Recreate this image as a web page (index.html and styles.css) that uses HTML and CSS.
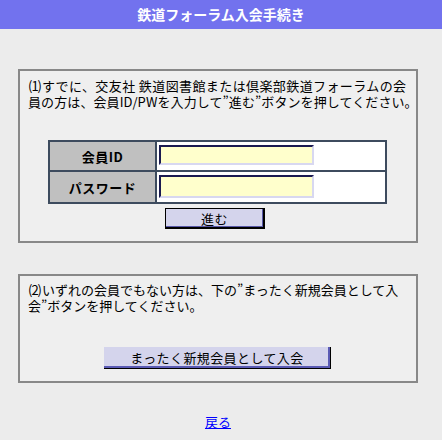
FILE: index.html
```html
<!DOCTYPE html>
<html lang="ja">
<head>
<meta charset="utf-8">
<title>鉄道フォーラム入会手続き</title>
<link rel="stylesheet" href="styles.css">
</head>
<body>
<div class="header">鉄道フォーラム入会手続き</div>
<div class="box box1">
  <p class="msg"><span class="l1"><span class="num">(1)</span>すでに、交友社 鉄道図書館または倶楽部鉄道フォーラムの会</span><br><span class="l2">員の方は、会員ID/PWを入力して”進む”ボタンを押してください。</span></p>
  <div class="form">
    <div class="row r1"><div class="label">会員ID</div><div class="value"><input class="field f1" type="text" autofocus></div></div>
    <div class="row r2"><div class="label">パスワード</div><div class="value"><input class="field f2" type="password"></div></div>
  </div>
  <button class="btn go" type="button">進む</button>
</div>
<div class="box box2">
  <p class="msg m2"><span class="num">(2)</span>いずれの会員でもない方は、下の”まったく新規会員として入<br>会”ボタンを押してください。</p>
  <button class="btn new" type="button">まったく新規会員として入会</button>
</div>
<div class="back"><a href="#">戻る</a></div>
</body>
</html>
```

FILE: styles.css
```css
body {
  margin: 0;
  background: #ececec;
  font-family: "Noto Sans CJK JP", sans-serif;
  font-size: 13px;
  color: #000;
}
.header {
  height: 29px;
  line-height: 29px;
  background: #7272ee;
  color: #fff;
  font-weight: bold;
  font-size: 14px;
  text-align: center;
}
.box {
  margin-left: 18px;
  width: 400px;
  box-sizing: border-box;
  border: 2px solid #888;
  background: #efefef;
}
.box1 {
  margin-top: 40px;
  height: 174px;
  padding: 7px 4px 0 8px;
}
.box2 {
  margin-top: 31px;
  height: 109px;
  padding: 6px 4px 0 8px;
}
.msg {
  margin: 0;
  line-height: 16px;
  white-space: nowrap;
}
.l1 { letter-spacing: 0.4px; }
.l2 { letter-spacing: 0.1px; }
.m2 { letter-spacing: 0; }
.num {
  letter-spacing: -1px;
  margin-right: 1px;
}
.form {
  margin: 30px 0 0 20px;
  width: 339px;
  box-sizing: border-box;
  border: 2px solid #3d4b5e;
  background: #fff;
}
.row {
  display: flex;
}
.row + .row {
  border-top: 2px solid #3d4b5e;
}
.r1 { height: 28px; }
.r2 { height: 30px; }
.label {
  width: 105px;
  border-right: 2px solid #3d4b5e;
  background: #c0c0c0;
  font-weight: bold;
  display: flex;
  align-items: center;
  justify-content: center;
  letter-spacing: 0.5px;
}
.value {
  padding: 3px 0 0 2px;
}
.field {
  display: block;
  width: 155px;
  box-sizing: border-box;
  margin: 0;
  padding: 0 2px;
  border: 2px solid;
  border-color: #1a1a50 #d8d8f0 #d8d8f0 #1a1a50;
  background: #ffffcc;
  outline: none;
  font-size: 13px;
  caret-color: #000;
}
.f1 { height: 20px; }
.f2 { height: 23px; }
.btn {
  display: block;
  padding: 0;
  background: #d4d4ec;
  font-family: "Noto Sans CJK JP", sans-serif;
  font-size: 13px;
  color: #000;
  letter-spacing: 0.4px;
}
.go {
  width: 100px;
  height: 21px;
  margin: 4px 0 0 137px;
  border: 1px solid #000;
  border-right-width: 2px;
  border-bottom-width: 2px;
  box-shadow: inset -1px -1px 0 #5858a8;
}
.new {
  width: 227px;
  height: 22px;
  margin: 33px 0 0 76px;
  border: 0;
  border-right: 1px solid #000;
  border-bottom: 1px solid #000;
  box-shadow: inset -2px -2px 0 #5a5ab4;
}
.back {
  margin-top: 31px;
  padding-right: 6px;
  text-align: center;
  line-height: 16px;
}
.back a {
  color: #0000ff;
  text-decoration: underline;
}
```
